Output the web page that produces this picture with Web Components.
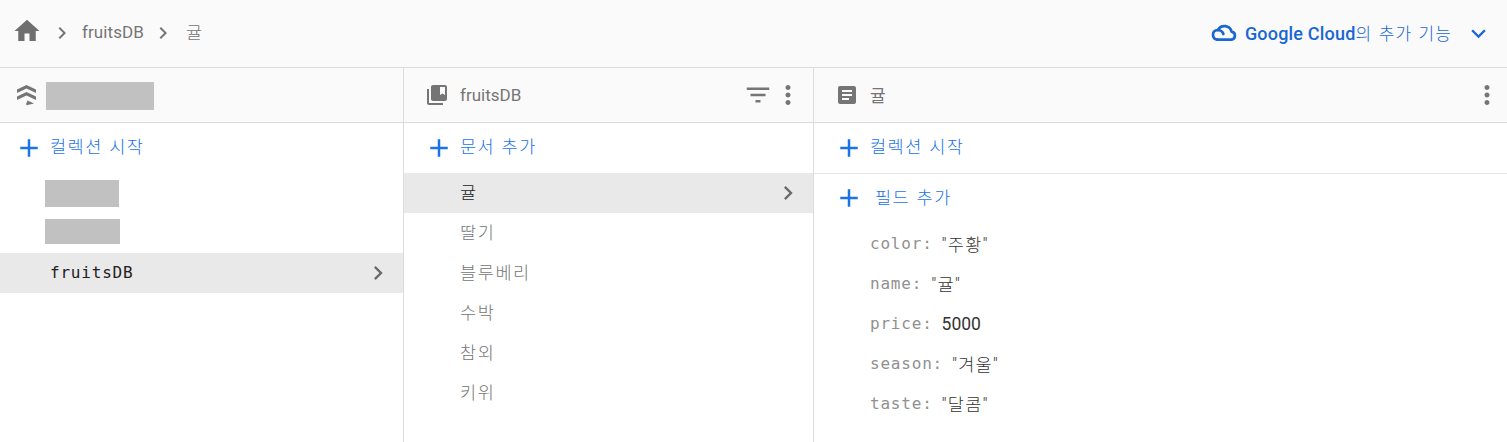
<!DOCTYPE html>
<html lang="ko"><head><meta charset="utf-8"><title>fruitsDB</title>
<style>
html,body{margin:0;padding:0;background:#fff;height:442px;overflow:hidden}
body{font-family:Roboto,"Noto Sans CJK KR",sans-serif}
</style></head><body>
<fb-app>
  <fb-toolbar slot="top"></fb-toolbar>
  <fb-panel style="--w:404px" slot="col">
    <fb-icon slot="icon" name="stack" size="24" color="#757575"></fb-icon>
    <fb-redact slot="title" w="108" h="28" top="2"></fb-redact>
    <fb-action label="컬렉션 시작" plus-left="14" text-gap="6"></fb-action>
    <fb-row pad="45"><fb-redact w="74" h="27" top="1"></fb-redact></fb-row>
    <fb-row pad="45"><fb-redact w="75" h="25" top="-3"></fb-redact></fb-row>
    <fb-row selected mono>fruitsDB</fb-row>
  </fb-panel>
  <fb-panel style="--w:410px" slot="col" right="10" pad="21">
    <fb-icon slot="icon" name="book" size="24" color="#757575"></fb-icon>
    <span slot="title">fruitsDB</span>
    <fb-icon slot="tools" name="filter" size="30" color="#757575"></fb-icon>
    <fb-icon slot="tools" name="more" size="30" color="#757575"></fb-icon>
    <fb-action label="문서 추가" plus-left="20" text-gap="6"></fb-action>
    <fb-row selected>귤</fb-row>
    <fb-row>딸기</fb-row>
    <fb-row>블루베리</fb-row>
    <fb-row>수박</fb-row>
    <fb-row>참외</fb-row>
    <fb-row>키위</fb-row>
  </fb-panel>
  <fb-panel style="--w:693px" slot="col" right="5" pad="21">
    <fb-icon slot="icon" name="doc" size="24" color="#757575"></fb-icon>
    <span slot="title" style="margin-top:-2px">귤</span>
    <fb-icon slot="tools" name="more" size="30" color="#757575"></fb-icon>
    <fb-action label="컬렉션 시작" plus-left="20" text-gap="6" divided></fb-action>
    <fb-action label="필드 추가" plus-left="20" text-gap="11" short></fb-action>
    <fb-field k="color" v="&quot;주황&quot;"></fb-field>
    <fb-field k="name" v="&quot;귤&quot;"></fb-field>
    <fb-field k="price" v="5000"></fb-field>
    <fb-field k="season" v="&quot;겨울&quot;"></fb-field>
    <fb-field k="taste" v="&quot;달콤&quot;"></fb-field>
  </fb-panel>
</fb-app>
<script>
const P={
 home:'<path d="M10 20v-6h4v6h5v-8h3L12 3 2 12h3v8z"/>',
 right:'<path d="M10 6L8.59 7.41 13.17 12l-4.58 4.59L10 18l6-6z"/>',
 down:'<path d="M16.59 8.59L12 13.17 7.41 8.59 6 10l6 6 6-6z"/>',
 plus:'<path d="M19 13h-6v6h-2v-6H5v-2h6V5h2v6h6v2z"/>',
 more:'<path d="M12 8c1.1 0 2-.9 2-2s-.9-2-2-2-2 .9-2 2 .9 2 2 2zm0 2c-1.1 0-2 .9-2 2s.9 2 2 2 2-.9 2-2-.9-2-2-2zm0 6c-1.1 0-2 .9-2 2s.9 2 2 2 2-.9 2-2-.9-2-2-2z"/>',
 filter:'<path d="M10 18h4v-2h-4v2zM3 6v2h18V6H3zm3 7h12v-2H6v2z"/>',
 book:'<path d="M4 6H2v14c0 1.1.9 2 2 2h14v-2H4V6zm16-4H8c-1.1 0-2 .9-2 2v12c0 1.1.9 2 2 2h12c1.1 0 2-.9 2-2V4c0-1.1-.9-2-2-2zm0 10l-2.5-1.5L15 12V4h5v8z"/>',
 doc:'<path d="M19 3H5c-1.1 0-2 .9-2 2v14c0 1.1.9 2 2 2h14c1.1 0 2-.9 2-2V5c0-1.1-.9-2-2-2zm-5 14H7v-2h7v2zm3-4H7v-2h10v2zm0-4H7V7h10v2z"/>',
 stack:'<path d="M11.5 2L21 6.5V10L11.5 5.6 2 10V6.5z"/><path d="M11.5 9L21 13.5V17L11.5 12.6 2 17v-3.5z"/><path d="M12.5 17.5l6.5 3-7.5 1.8-.3-1.5z"/>'
};
class FbIcon extends HTMLElement{connectedCallback(){
 if(this.shadowRoot)return;
 const s=this.getAttribute('size')||24,c=this.getAttribute('color')||'#757575';
 this.attachShadow({mode:'open'}).innerHTML=`<style>:host{display:inline-flex;flex:none;width:${s}px;height:${s}px}svg{display:block;width:100%;height:100%;fill:${c}}</style><svg viewBox="0 0 24 24">${P[this.getAttribute('name')]}</svg>`;
}}
customElements.define('fb-icon',FbIcon);
class FbCloud extends HTMLElement{constructor(){super();this.attachShadow({mode:'open'}).innerHTML=`<style>:host{display:inline-flex;flex:none;width:26px;height:18px}svg{display:block;fill:none;stroke:#1967d2;stroke-width:2.7;stroke-linejoin:round;stroke-linecap:round}</style><svg width="26" height="18" viewBox="0 0 26 18"><path d="M6.2 15.7H20.3A4.1 4.1 0 0 0 20.6 7.6 7.4 7.4 0 0 0 7 5.9"/><path d="M6.2 15.7A4.9 4.9 0 0 1 6.2 6C9.3 6 11.6 7.6 12.4 10"/></svg>`}}
customElements.define('fb-cloud',FbCloud);
class FbRedact extends HTMLElement{connectedCallback(){
 const g=a=>this.getAttribute(a)||0;
 this.attachShadow({mode:'open'}).innerHTML=`<style>:host{display:block;flex:none;background:#c1c1c1;width:${g('w')}px;height:${g('h')}px;margin-top:${g('top')}px}</style>`;
}}
customElements.define('fb-redact',FbRedact);
class FbApp extends HTMLElement{constructor(){super();this.attachShadow({mode:'open'}).innerHTML=`<style>
:host{display:flex;flex-direction:column;width:1507px;height:442px;background:#fff}
.cols{display:flex;flex:1;min-height:0}
</style><slot name="top"></slot><div class="cols"><slot name="col"></slot></div>`}}
customElements.define('fb-app',FbApp);
class FbToolbar extends HTMLElement{connectedCallback(){this.attachShadow({mode:'open'}).innerHTML=`<style>
:host{display:flex;align-items:center;box-sizing:border-box;height:68px;background:#fafafa;border-bottom:1px solid #dcdcdc;color:#757575;font-size:17px;padding:0 14px 1px 12px}
.crumb{display:flex;align-items:center}
.ko{font-family:"Noto Sans CJK KR",sans-serif;font-weight:300;font-size:17.5px;margin-top:-3px}
.h{margin-top:-5px}
.t{margin-top:-2px;letter-spacing:.1px}
.sp{flex:1}
.gc{display:flex;align-items:center;color:#1967d2}
.b{font-weight:500;letter-spacing:.2px;margin-left:8px;font-size:18px}
.k{font-family:"Noto Sans CJK KR",sans-serif;font-weight:300;font-size:17px;letter-spacing:1.1px;word-spacing:.5px;white-space:pre;margin-top:-2px}
</style>
<div class="crumb"><fb-icon class="h" name="home" size="30" color="#6f6f6f"></fb-icon><fb-icon name="right" size="24" style="margin-left:8px"></fb-icon><span class="t" style="margin-left:8px">fruitsDB</span><fb-icon name="right" size="24" style="margin-left:7px"></fb-icon><span class="ko" style="margin-left:11px">귤</span></div>
<div class="sp"></div>
<div class="gc"><fb-cloud></fb-cloud><span class="b">Google Cloud</span><span class="k">의 추가 기능</span><fb-icon name="down" size="29" color="#1967d2" style="margin-left:12px"></fb-icon></div>`;}}
customElements.define('fb-toolbar',FbToolbar);
class FbPanel extends HTMLElement{connectedCallback(){
 const hasPad=this.hasAttribute('pad');
 this.attachShadow({mode:'open'}).innerHTML=`<style>
:host{display:flex;flex-direction:column;flex:none;box-sizing:border-box;width:var(--w);border-right:1px solid #dcdcdc}
:host(:last-child){border-right:0}
header{display:flex;align-items:center;box-sizing:border-box;height:55px;background:#fafafa;border-bottom:1px solid #dcdcdc;padding-left:${this.getAttribute('pad')||15}px;padding-right:${this.getAttribute('right')||0}px}
.icon{display:flex;margin-right:${hasPad?11:7}px}
.title{flex:1;display:flex;align-items:center;color:#757575;font-size:17px;font-family:Roboto,"Noto Sans CJK KR",sans-serif}
.tools{display:flex;align-items:center}
</style><header><div class="icon"><slot name="icon"></slot></div><div class="title"><slot name="title"></slot></div><div class="tools"><slot name="tools"></slot></div></header><slot></slot>`;}}
customElements.define('fb-panel',FbPanel);
class FbAction extends HTMLElement{connectedCallback(){
 const short=this.hasAttribute('short'),div=this.hasAttribute('divided');
 this.attachShadow({mode:'open'}).innerHTML=`<style>
:host{display:flex;align-items:center;box-sizing:border-box;height:${div?51:50}px;${div?'border-bottom:1px solid #e4e4e4;':''}padding-left:${this.getAttribute('plus-left')}px;padding-bottom:${short?2:1}px;color:#1a73e8;font-family:"Noto Sans CJK KR",sans-serif;font-weight:300;font-size:17.5px;letter-spacing:1.5px}
span{margin-left:${this.getAttribute('text-gap')}px;white-space:pre;margin-top:-${short?3:5}px}
</style><fb-icon name="plus" size="30" color="#1a73e8"></fb-icon><span>${this.getAttribute('label')}</span>`;}}
customElements.define('fb-action',FbAction);
class FbRow extends HTMLElement{connectedCallback(){
 const sel=this.hasAttribute('selected');
 this.attachShadow({mode:'open'}).innerHTML=`<style>
:host{display:flex;align-items:center;box-sizing:border-box;height:40px;padding-left:${this.getAttribute('pad')||56}px;padding-right:11px;font-family:"Noto Sans CJK KR",sans-serif;font-weight:300;font-size:17.5px;letter-spacing:1.6px;color:#757575}
:host([selected]){background:#e9e9e9;color:#212121}
:host([mono]){font-family:"DejaVu Sans Mono",monospace;font-weight:400;letter-spacing:.8px;font-size:16px;padding-left:50px}
.s{flex:1;display:flex;min-height:0;align-items:center;margin-top:-4px}
:host([pad]) .s{margin-top:0}
:host([mono]) .s{margin-top:-1px}
</style><div class="s"><slot></slot></div>${sel?'<fb-icon name="right" size="28" color="#6a6a6a"></fb-icon>':''}`;}}
customElements.define('fb-row',FbRow);
class FbField extends HTMLElement{connectedCallback(){
 const v=this.getAttribute('v'),ko=v[0]==='"';
 this.attachShadow({mode:'open'}).innerHTML=`<style>
:host{display:flex;align-items:center;height:40px;padding-left:56px;color:#333}
.k{font-family:"DejaVu Sans Mono",monospace;font-size:16px;color:#909090;letter-spacing:.8px;margin-right:9px;margin-top:-2px}
.v{font-family:Roboto,"Noto Sans CJK KR",sans-serif;font-weight:${ko?300:400};font-size:17.5px;white-space:pre;letter-spacing:${ko?1.2:0}px;margin-top:${ko?-2:0}px}
</style><span class="k">${this.getAttribute('k')}:</span><span class="v">${v.replace(/"/g,'&quot;')}</span>`;}}
customElements.define('fb-field',FbField);
</script>
</body></html>
